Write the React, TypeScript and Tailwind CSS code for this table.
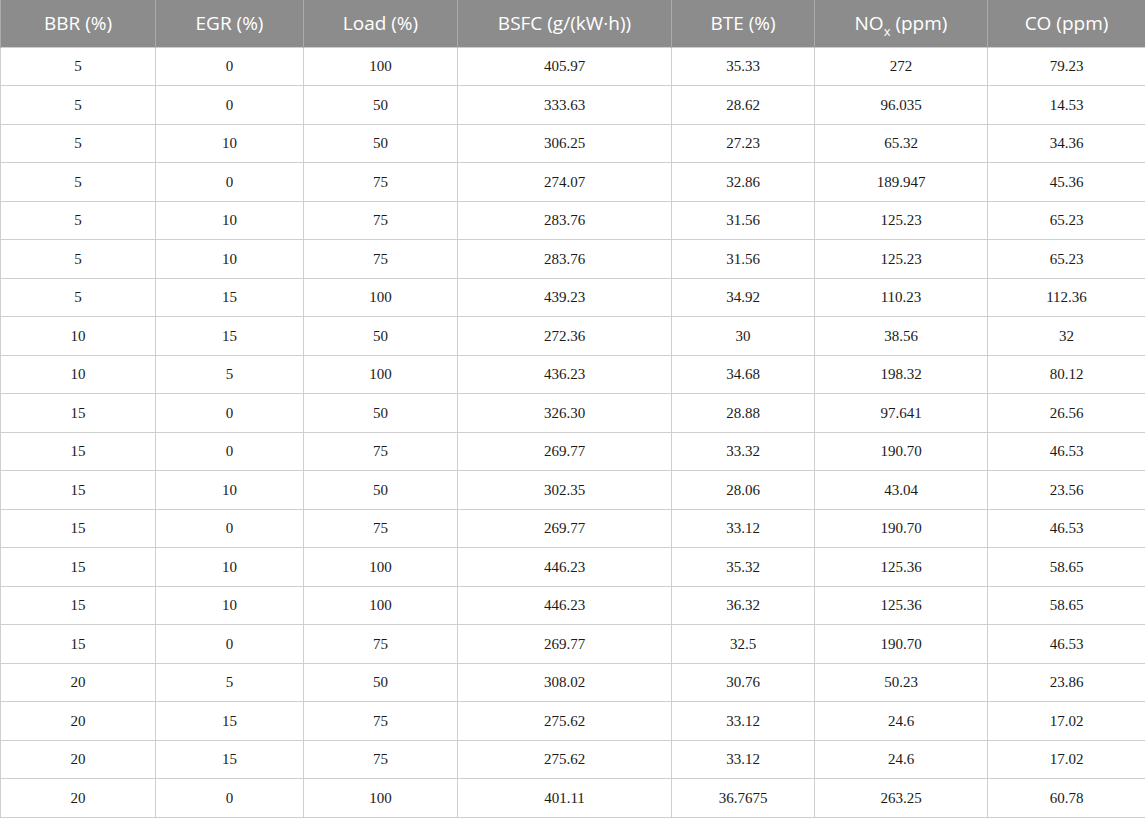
const headers: React.ReactNode[] = [
  "BBR (%)",
  "EGR (%)",
  "Load (%)",
  "BSFC (g/(kW·h))",
  "BTE (%)",
  <>
    NO<sub className="text-[13px] align-[-3px]">x</sub> (ppm)
  </>,
  "CO (ppm)",
];

const widths = ["w-[155px]", "w-[148px]", "w-[154px]", "w-[214px]", "w-[143px]", "w-[173px]", "w-[158px]"];

const rows = [
  ["5", "0", "100", "405.97", "35.33", "272", "79.23"],
  ["5", "0", "50", "333.63", "28.62", "96.035", "14.53"],
  ["5", "10", "50", "306.25", "27.23", "65.32", "34.36"],
  ["5", "0", "75", "274.07", "32.86", "189.947", "45.36"],
  ["5", "10", "75", "283.76", "31.56", "125.23", "65.23"],
  ["5", "10", "75", "283.76", "31.56", "125.23", "65.23"],
  ["5", "15", "100", "439.23", "34.92", "110.23", "112.36"],
  ["10", "15", "50", "272.36", "30", "38.56", "32"],
  ["10", "5", "100", "436.23", "34.68", "198.32", "80.12"],
  ["15", "0", "50", "326.30", "28.88", "97.641", "26.56"],
  ["15", "0", "75", "269.77", "33.32", "190.70", "46.53"],
  ["15", "10", "50", "302.35", "28.06", "43.04", "23.56"],
  ["15", "0", "75", "269.77", "33.12", "190.70", "46.53"],
  ["15", "10", "100", "446.23", "35.32", "125.36", "58.65"],
  ["15", "10", "100", "446.23", "36.32", "125.36", "58.65"],
  ["15", "0", "75", "269.77", "32.5", "190.70", "46.53"],
  ["20", "5", "50", "308.02", "30.76", "50.23", "23.86"],
  ["20", "15", "75", "275.62", "33.12", "24.6", "17.02"],
  ["20", "15", "75", "275.62", "33.12", "24.6", "17.02"],
  ["20", "0", "100", "401.11", "36.7675", "263.25", "60.78"],
];

const App = () => {
  return (
    <div className="w-[1145px] h-[818px] bg-white overflow-hidden">
      <table className="w-[1145px] table-fixed border-collapse">
        <colgroup>
          {widths.map((w, i) => (
            <col key={i} className={w} />
          ))}
        </colgroup>
        <thead>
          <tr className="h-[47px] bg-[#8c8c8c]">
            {headers.map((h, i) => (
              <th
                key={i}
                className="border-x border-[#ababab] p-0 text-center align-middle font-normal text-white text-[19px] font-['Open_Sans',sans-serif]"
              >
                {h}
              </th>
            ))}
          </tr>
        </thead>
        <tbody>
          {rows.map((row, r) => (
            <tr key={r} className="h-[38.5px]">
              {row.map((cell, c) => (
                <td
                  key={c}
                  className="border border-[#cfcfcf] p-0 text-center align-middle text-[15px] text-[#1a1a1a] font-['Liberation_Serif',serif]"
                >
                  {cell}
                </td>
              ))}
            </tr>
          ))}
        </tbody>
      </table>
    </div>
  );
};

export default App;
